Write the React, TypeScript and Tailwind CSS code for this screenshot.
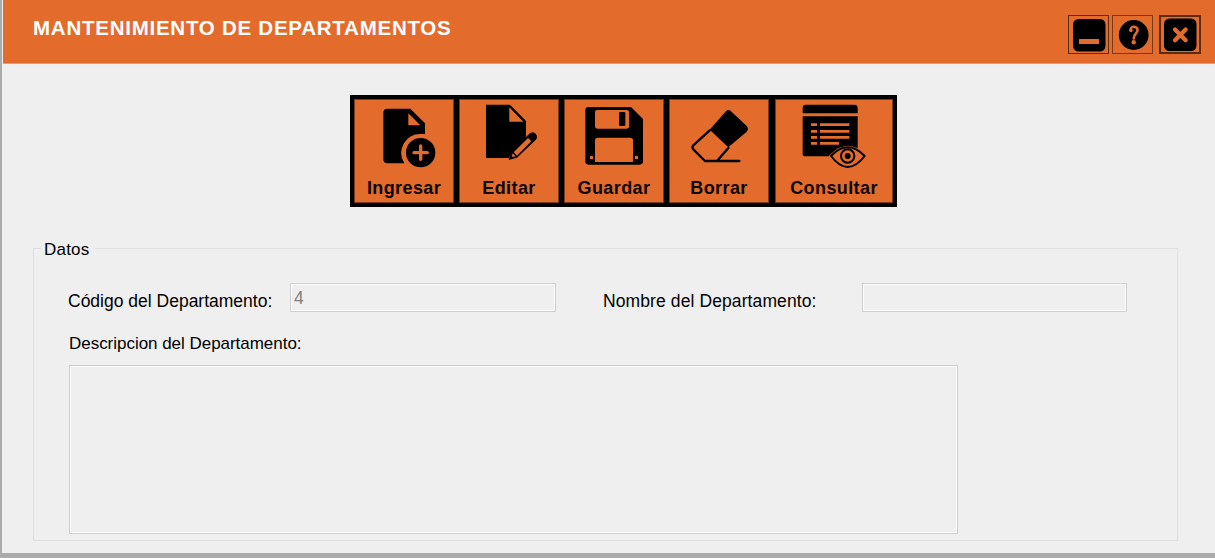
import type { ReactNode } from "react";

function ToolButton({ label, wide, children }: { label: string; wide?: boolean; children: ReactNode }) {
  return (
    <button className={`flex h-[104px] flex-col items-center bg-[#e36c2d] outline outline-1 outline-[#7a3a18] -outline-offset-1 ${wide ? "ml-px w-[118px]" : "w-[100px]"}`}>
      {children}
      <span className="mt-px text-[18px] leading-5 font-bold tracking-[0.4px] whitespace-nowrap text-[#0d0602]">{label}</span>
    </button>
  );
}

function AddFileIcon() {
  return (
    <svg className="block h-[78px] w-[100px]" viewBox="27 27 300 234">
      <path d="M127 56H196L240 100V132H228A57 57 0 0 0 178 220H127Q115 220 115 208V68Q115 56 127 56Z" />
      <path d="M190 70V106H226Z" fill="#e36c2d" />
      <circle cx="227" cy="188" r="44" />
      <path d="M227 168V208M207 188H247" stroke="#e36c2d" strokeWidth="10" strokeLinecap="round" />
    </svg>
  );
}

function EditFileIcon() {
  return (
    <svg className="block h-[78px] w-[100px]" viewBox="342 27 300 234">
      <path d="M423 44H495L543 93V146L499 190L492 204H423Z" />
      <path d="M493 52V95H535Z" fill="#e36c2d" />
      <path d="M491 210L499 185L553 131Q563 122 572 131Q580 142 571 151L516 203Z" />
      <path d="M506 187L549 144L559 154L516 197Z" fill="#e36c2d" />
      <path d="M500 201L503 190L512 199Z" fill="#e36c2d" />
    </svg>
  );
}

function SaveIcon() {
  return (
    <svg className="block h-[78px] w-[100px]" viewBox="27 27 300 234">
      <path d="M101 51H228L264 87V214Q264 224 254 224H101Q91 224 91 214V61Q91 51 101 51Z" />
      <path d="M126 60H216Q222 60 222 66V108Q222 116 214 116H128Q120 116 120 108V66Q120 60 126 60Z" fill="#e36c2d" />
      <rect x="192" y="66" width="19" height="42" rx="3" />
      <path d="M128 143H226Q234 143 234 151V216H120V151Q120 143 128 143Z" fill="#e36c2d" />
      <path d="M105 198h9v9h-9zM240 198h9v9h-9z" fill="#e36c2d" />
    </svg>
  );
}

function EraserIcon() {
  return (
    <svg className="block h-[78px] w-[100px]" viewBox="342 27 300 234">
      <path d="M464 119L513 64Q520 56 528 64L575 108Q583 117 575 125L520 172Z" />
      <path d="M464 121L415 166Q410 172 415 178L450 213H486L520 174M450 213H553" fill="none" stroke="#000" strokeWidth="7" strokeLinejoin="round" strokeLinecap="round" />
    </svg>
  );
}

function ReportIcon() {
  return (
    <svg className="block h-[78px] w-[118px]" viewBox="30 27 354 234">
      <path d="M113 70V54Q113 44 123 44H268Q278 44 278 54V70ZM113 79H278V199H121Q113 199 113 191Z" />
      <path d="M138 104h18M165 104h88M138 124h18M165 124h88M138 142h18M165 142h88M138 160h18M165 160h57" stroke="#e36c2d" strokeWidth="8" />
      <path d="M191 198Q249 137 307 198Q249 259 191 198Z" fill="#e36c2d" />
      <path d="M198 198Q248 146 299 198Q248 264 198 198Z" fill="#e36c2d" stroke="#000" strokeWidth="6" strokeLinejoin="round" />
      <circle cx="248" cy="198" r="20" fill="none" stroke="#000" strokeWidth="6" />
      <circle cx="248" cy="198" r="9" />
    </svg>
  );
}

function WindowControls() {
  return (
    <div className="flex pt-[15px]">
      <button aria-label="Minimizar" className="h-[39px] w-[41px] border border-[#5c2b10]">
        <svg className="block h-[37px] w-[39px]" viewBox="0 0 39 37">
          <rect x="4" y="3" width="32.5" height="32.5" rx="5.5" />
          <rect x="10" y="23" width="20" height="5" rx=".6" fill="#e36c2d" />
        </svg>
      </button>
      <button aria-label="Ayuda" className="ml-[3px] h-[39px] w-[41px] border border-[#783916]">
        <svg className="block h-[37px] w-[39px]" viewBox="0 0 39 37">
          <circle cx="20.7" cy="19" r="14.9" />
          <path d="M17.8 14.6C16.4 9.6 24.6 9.4 24.6 14C24.6 17.6 20.7 18 20.7 22.4" fill="none" stroke="#e36c2d" strokeWidth="2.6" strokeLinecap="round" />
          <circle cx="17.9" cy="14.2" r="1.7" fill="#e36c2d" />
          <circle cx="20.7" cy="26.2" r="2.2" fill="#e36c2d" />
        </svg>
      </button>
      <button aria-label="Cerrar" className="ml-1.5 h-[39px] w-[42px] border-2 border-[#5c2b10]">
        <svg className="block h-[35px] w-[38px]" viewBox="0 0 38 35">
          <rect x="3" y="1.5" width="32.5" height="32.5" rx="5.5" />
          <path d="M14 12.6L24.6 23.2M24.6 12.6L14 23.2" stroke="#e36c2d" strokeWidth="4.3" strokeLinecap="round" />
        </svg>
      </button>
    </div>
  );
}

const field = "border border-[#cfcfcf] bg-[#efefef] shadow-[inset_0_0_0_1px_#fcfcfc] outline-none";

export default function App() {
  return (
    <div className="flex h-[558px] w-[1215px] flex-col overflow-hidden border-b-[5px] border-l-2 border-[#ababab] bg-[#efefef] font-['Liberation_Sans',Arial,sans-serif] text-black">
      <header className="ml-px flex h-16 shrink-0 justify-between border-b border-[#e99a70] bg-[#e36c2d] pr-[14px] pl-[30px]">
        <h1 className="pt-4 text-[20.5px] leading-6 font-bold tracking-[0.75px] whitespace-nowrap text-white">MANTENIMIENTO DE DEPARTAMENTOS</h1>
        <WindowControls />
      </header>

      <nav className="mt-[31px] ml-[348px] flex h-28 w-[547px] shrink-0 gap-[5px] bg-black p-1">
        <ToolButton label="Ingresar"><AddFileIcon /></ToolButton>
        <ToolButton label="Editar"><EditFileIcon /></ToolButton>
        <ToolButton label="Guardar"><SaveIcon /></ToolButton>
        <ToolButton label="Borrar"><EraserIcon /></ToolButton>
        <ToolButton label="Consultar" wide><ReportIcon /></ToolButton>
      </nav>

      <section className="mt-8 ml-[31px] w-[1145px]">
        <div className="flex h-5 items-center">
          <span className="h-px w-2 translate-y-[-1px] bg-[#dedede]" />
          <h2 className="w-[54px] pt-px pl-[3px] text-[17px] leading-5 tracking-[0.2px]">Datos</h2>
          <span className="h-px flex-1 translate-y-[-1px] bg-[#dedede]" />
        </div>
        <div className="-mt-[11px] h-[293px] border border-t-0 border-[#dedede] pl-[34px]">
          <div className="flex pt-[35px]">
            <label htmlFor="codigo" className="w-[222px] pt-2 text-[17.5px] leading-5 whitespace-nowrap">Código del Departamento:</label>
            <input id="codigo" readOnly value="4" className={`h-[29px] w-[266px] px-[3px] pt-0.5 text-[17.5px] text-[#808080] ${field}`} />
            <label htmlFor="nombre" className="ml-[47px] w-[259px] pt-2 text-[17.5px] leading-5 tracking-[0.1px] whitespace-nowrap">Nombre del Departamento:</label>
            <input id="nombre" readOnly className={`h-[29px] w-[265px] ${field}`} />
          </div>
          <label htmlFor="descripcion" className="mt-[22px] ml-px block text-[17px] leading-5 tracking-[-0.03px] whitespace-nowrap">Descripcion del Departamento:</label>
          <textarea id="descripcion" readOnly className={`mt-[11px] ml-px block h-[169px] w-[889px] resize-none ${field}`} />
        </div>
      </section>
    </div>
  );
}
